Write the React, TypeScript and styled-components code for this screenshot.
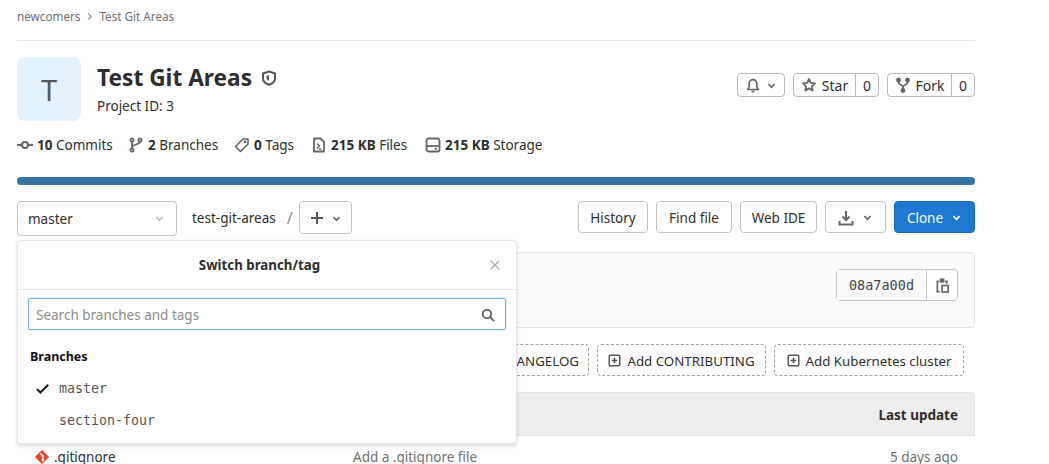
import * as React from "react"
import styled, { createGlobalStyle } from "styled-components"

const sans = `"Noto Sans", "Open Sans", Arial, sans-serif`
const mono = `"DejaVu Sans Mono", "Liberation Mono", monospace`

const GlobalStyle = createGlobalStyle`
    html, body {
        margin: 0;
        height: 464px;
        overflow: hidden;
        background: #fff;
    }
    * {
        box-sizing: border-box;
    }
    body {
        font-family: ${sans};
        font-size: 14px;
        color: #2e2e2e;
    }
`

const Page = styled.div`
    width: 958px;
    margin-left: 17px;
    height: 464px;
`

const Breadcrumbs = styled.nav`
    display: flex;
    align-items: center;
    gap: 4px;
    height: 41px;
    padding-bottom: 8px;
    border-bottom: 1px solid #e5e5e5;
    font-size: 11.7px;
    color: #707070;
`

const ProjectHeader = styled.header`
    display: flex;
    align-items: center;
    margin-top: 16px;
    height: 64px;
`

const Avatar = styled.div`
    width: 64px;
    height: 64px;
    display: flex;
    align-items: center;
    justify-content: center;
    background: #e3f2fd;
    border-radius: 8px;
    font-size: 29px;
    color: #555;
    margin-right: 16px;
`

const TitleBlock = styled.div`
    display: flex;
    flex-direction: column;
    flex: 1;
`

const TitleRow = styled.div`
    display: flex;
    align-items: center;
    gap: 9px;
    height: 32px;
`

const Title = styled.h1`
    margin: 0;
    font-size: 22.7px;
    font-weight: 700;
    line-height: 32px;
    color: #2e2e2e;
`

const ProjectId = styled.div`
    font-size: 13.5px;
    line-height: 20px;
    margin-top: 2px;
`

const Actions = styled.div`
    display: flex;
    gap: 8px;
    align-self: flex-start;
    margin-top: 16px;
`

const Group = styled.div`
    display: flex;
    height: 24px;
    border: 1px solid #bbb;
    border-radius: 4px;
    font-size: 14px;
    background: #fff;
`

const GroupPart = styled.div<{ $divided?: boolean; $w: number }>`
    display: flex;
    align-items: center;
    justify-content: center;
    gap: 5px;
    width: ${p => p.$w}px;
    border-left: ${p => (p.$divided ? "1px solid #bbb" : "none")};
`

const Stats = styled.div`
    display: flex;
    align-items: center;
    margin-top: 14px;
    height: 20px;
`

const Stat = styled.div<{ $w: number }>`
    display: flex;
    align-items: center;
    gap: 4px;
    width: ${p => p.$w}px;
    font-size: 13.5px;
    white-space: nowrap;

    b {
        font-weight: 700;
    }
`

const LanguageBar = styled.div`
    height: 8px;
    margin-top: 22px;
    background: #3572a5;
    border-radius: 4px;
`

const Toolbar = styled.div`
    display: flex;
    align-items: flex-start;
    margin-top: 16px;
    height: 51px;
`

const RefSwitcher = styled.div`
    position: relative;
    width: 160px;
    margin-right: 15px;
`

const RefButton = styled.div`
    display: flex;
    align-items: center;
    justify-content: space-between;
    height: 35px;
    padding: 0 11px 0 10px;
    border: 1px solid #c4c4c4;
    border-radius: 4px;
    font-size: 13.5px;
`

const Dropdown = styled.div`
    position: absolute;
    top: 39px;
    left: 0;
    z-index: 10;
    width: 500px;
    height: 204px;
    background: #fff;
    border: 1px solid #e5e5e5;
    border-radius: 4px;
    box-shadow: 0 2px 4px rgba(0, 0, 0, 0.15);
`

const DropdownHeader = styled.div`
    position: relative;
    height: 49px;
    display: flex;
    align-items: center;
    justify-content: center;
    padding-right: 15px;
    border-bottom: 1px solid #e5e5e5;
    font-size: 13.3px;
    font-weight: 700;
`

const CloseButton = styled.span`
    position: absolute;
    right: 14px;
    top: 17px;
    display: flex;
    color: #a7a7a7;
`

const SearchBox = styled.div`
    display: flex;
    align-items: center;
    justify-content: space-between;
    height: 32px;
    margin: 8px 10px 0;
    padding: 1px 10px 0 7px;
    border: 1px solid #73b1ee;
    border-radius: 2px;
    box-shadow: 0 0 2px rgba(31, 120, 209, 0.35);
    font-size: 13.5px;
    color: #8c8c8c;
`

const SectionLabel = styled.div`
    margin: 18px 0 6px 12px;
    font-size: 12.5px;
    line-height: 18px;
    font-weight: 700;
    color: #111;
`

const BranchRow = styled.div`
    display: flex;
    align-items: center;
    height: 32px;
    padding-left: 18px;
    font-family: ${mono};
    font-size: 13.3px;
    color: #555;
`

const CheckSlot = styled.span`
    display: flex;
    width: 23px;
    color: #222;
`

const RepoName = styled.span`
    font-size: 13.5px;
    line-height: 35px;
`

const PathSep = styled.span`
    margin: 0 6px 0 11px;
    font-size: 16px;
    line-height: 35px;
    color: #8c8c8c;
`

const Button = styled.div<{ $primary?: boolean; $w: number }>`
    display: flex;
    align-items: center;
    justify-content: center;
    gap: 8px;
    height: 32px;
    padding-top: 1px;
    width: ${p => p.$w}px;
    border: 1px solid ${p => (p.$primary ? "#1b69b6" : "#c4c4c4")};
    border-radius: 4px;
    font-size: 13.5px;
    background: ${p => (p.$primary ? "#1f78d1" : "#fff")};
    color: ${p => (p.$primary ? "#fff" : "#2e2e2e")};
`

const AddButton = styled(Button)`
    height: 33px;
    gap: 6px;
`

const ToolbarRight = styled.div`
    display: flex;
    gap: 8px;
    margin-left: auto;
`

const CommitBox = styled.div`
    display: flex;
    justify-content: flex-end;
    height: 76px;
    padding: 16px 16px 0 0;
    background: #fafafa;
    border: 1px solid #e5e5e5;
    border-radius: 4px;
`

const CommitGroup = styled.div`
    display: flex;
    height: 32px;
    border: 1px solid #c4c4c4;
    border-radius: 4px;
`

const Sha = styled.div`
    display: flex;
    align-items: center;
    justify-content: center;
    width: 89px;
    background: #fafafa;
    font-family: ${mono};
    font-size: 13.5px;
    color: #444;
`

const CopyPart = styled.div`
    display: flex;
    align-items: center;
    justify-content: center;
    width: 31px;
    background: #fff;
    border-left: 1px solid #c4c4c4;
    border-radius: 0 4px 4px 0;
`

const Suggestions = styled.div`
    display: flex;
    justify-content: flex-end;
    gap: 8px;
    height: 64px;
    padding: 16px 11px 16px 0;
`

const Suggestion = styled.div<{ $w: number }>`
    display: flex;
    align-items: center;
    justify-content: center;
    gap: 6px;
    height: 32px;
    padding-top: 1px;
    flex: 0 0 ${p => p.$w}px;
    border: 1px dashed #a0a0a0;
    border-radius: 4px;
    font-size: 13.3px;
    white-space: nowrap;
`

const TableHead = styled.div`
    display: flex;
    justify-content: flex-end;
    align-items: center;
    height: 44px;
    padding: 1px 16px 0 0;
    background: #eee;
    border: 1px solid #e5e5e5;
    border-bottom-color: #dcdcdc;
    border-radius: 4px 4px 0 0;
    font-size: 13.5px;
    font-weight: 700;
`

const TableRow = styled.div`
    display: grid;
    grid-template-columns: 318px 1fr auto;
    align-items: center;
    height: 42px;
    padding: 0 17px 0 18px;
    font-size: 13.5px;
`

const FileCell = styled.span`
    display: flex;
    align-items: center;
    gap: 5px;
`

const Muted = styled.span`
    color: #707070;
`

const Svg: React.FC<{ size?: number; children: React.ReactNode; stroke?: string; sw?: number }> = ({
    size = 16,
    children,
    stroke = "#666",
    sw = 2,
}) => (
    <svg width={size} height={size} viewBox="0 0 16 16" fill="none" stroke={stroke} strokeWidth={sw} style={{ flex: "none" }}>
        {children}
    </svg>
)

const Chevron: React.FC<{ color?: string; size?: number }> = ({ color = "#666", size = 12 }) => (
    <Svg size={size} stroke={color} sw={2.4}>
        <path d="M3.500 6l4.500 4.500L12.500 6" />
    </Svg>
)

// breadcrumb separator points right, unlike the dropdown carets
const CrumbSeparator = () => (
    <Svg size={11} stroke="#8c8c8c" sw={1.6}>
        <path d="M6 3.500l4.500 4.500L6 12.500" />
    </Svg>
)

const CommitIcon = () => (
    <Svg>
        <circle cx="8" cy="8" r="3" />
        <path d="M0 8h5M11 8h5" />
    </Svg>
)
const BranchIcon = () => (
    <Svg sw={1.8}>
        <circle cx="4" cy="3" r="1.600" />
        <circle cx="4" cy="13" r="1.600" />
        <circle cx="12" cy="3" r="1.600" />
        <path d="M4 4.500v7M12 4.500c0 3.500-8 2.500-8 6" />
    </Svg>
)
const TagIcon = () => (
    <Svg sw={1.6}>
        <path d="M9 2h4.500a.5.5 0 0 1 .5.5V7l-7.500 7.500L1.500 9.500z" strokeLinejoin="round" />
        <circle cx="11" cy="5" r=".6" />
    </Svg>
)
const FileIcon = () => (
    <Svg sw={1.8}>
        <path d="M3 1.500h6.500L13 5v9.500H3z" strokeLinejoin="round" />
        <path d="M6 6.500L8.500 9 6 11.500M8 12h2.500" strokeWidth="1.400" />
    </Svg>
)
const DiskIcon = () => (
    <Svg sw={1.8}>
        <rect x="1.500" y="1.500" width="13" height="13" rx="2" />
        <path d="M2 9h12" />
        <path d="M9.500 11.700h2.500" />
    </Svg>
)
const ShieldIcon = () => (
    <Svg stroke="#555" sw={2}>
        <path d="M8 1.500l6 2v4.500c0 3.500-3 5.800-6 6.700-3-.9-6-3.200-6-6.700V3.500z" strokeLinejoin="round" />
        <path d="M8 5L5.500 6v2c0 1 .8 2 2.500 2.800z" fill="#555" stroke="none" />
    </Svg>
)
const BellIcon = () => (
    <Svg sw={1.7}>
        <path d="M2.500 12.500h11c-1-1-1.700-2-1.700-3.500V6.500a3.800 3.800 0 0 0-7.600 0V9c0 1.500-.7 2.500-1.700 3.500z" strokeLinejoin="round" />
        <path d="M6.500 14.500h3" />
    </Svg>
)
const StarIcon = () => (
    <Svg sw={1.8}>
        <path d="M8 2l1.800 3.900 4.200.5-3.100 2.900.8 4.200L8 11.400l-3.700 2.100.8-4.200L2 6.400l4.200-.5z" strokeLinejoin="round" />
    </Svg>
)
const ForkIcon = () => (
    <Svg sw={1.8}>
        <circle cx="3.500" cy="3" r="1.500" fill="#666" />
        <circle cx="12.500" cy="3" r="1.500" fill="#666" />
        <circle cx="8" cy="13.500" r="1.500" fill="#666" />
        <path d="M3.500 4v1.500c0 2 4.500 2.500 4.500 4.500v2M12.500 4v1.500c0 2-4.500 2.500-4.500 4.500" />
    </Svg>
)
const PlusIcon = () => (
    <Svg stroke="#555" sw={2}>
        <path d="M8 2v12M2 8h12" />
    </Svg>
)
const DownloadIcon = () => (
    <Svg sw={2}>
        <path d="M8 1v9M4.500 6.500L8 10l3.500-3.500M1.500 11v3.500h13V11" />
    </Svg>
)
const ClipboardIcon = () => (
    <Svg size={15} sw={1.8}>
        <path d="M5 14.500H2.500V3.500h2M10.500 3.500h2V6" />
        <rect x="5" y="0.500" width="5" height="4.500" fill="#666" stroke="none" />
        <rect x="7.500" y="8" width="6.500" height="7" />
    </Svg>
)
const PlusSquareIcon = () => (
    <Svg size={13} sw={1.8} stroke="#555">
        <rect x="1.500" y="1.500" width="13" height="13" rx="1.500" />
        <path d="M8 4.500v7M4.500 8h7" strokeWidth="2" />
    </Svg>
)
const SearchIcon = () => (
    <Svg size={14} sw={2.2} stroke="#666">
        <circle cx="6.800" cy="6.800" r="4.800" />
        <path d="M10.500 10.500l4.500 4.500" />
    </Svg>
)
const CheckIcon = () => (
    <Svg size={13} sw={2.6} stroke="#222">
        <path d="M1 8.500l4.500 4.500L15 3.500" />
    </Svg>
)
const CloseIcon = () => (
    <Svg size={14} sw={1.6} stroke="#a7a7a7">
        <path d="M3 3l10 10M13 3L3 13" />
    </Svg>
)
const GitFileIcon = () => (
    <svg width="14" height="14" viewBox="0 0 16 16" style={{ flex: "none" }}>
        <path d="M8 .5L15.500 8 8 15.500.5 8z" fill="#e24329" stroke="#e24329" strokeLinejoin="round" />
        <path d="M6 4l3 3v5" fill="none" stroke="#fff" strokeWidth="1.400" />
        <circle cx="9" cy="7" r="1.400" fill="#fff" />
        <circle cx="9" cy="11.500" r="1.400" fill="#fff" />
    </svg>
)

export default function App() {
    return (
        <Page>
            <GlobalStyle />
            <Breadcrumbs>
                <span>newcomers</span>
                <CrumbSeparator />
                <span>Test Git Areas</span>
            </Breadcrumbs>

            <ProjectHeader>
                <Avatar>T</Avatar>
                <TitleBlock>
                    <TitleRow>
                        <Title>Test Git Areas</Title>
                        <ShieldIcon />
                    </TitleRow>
                    <ProjectId>Project ID: 3</ProjectId>
                </TitleBlock>
                <Actions>
                    <Group>
                        <GroupPart $w={46}>
                            <BellIcon />
                            <Chevron size={11} />
                        </GroupPart>
                    </Group>
                    <Group>
                        <GroupPart $w={61}>
                            <StarIcon />
                            Star
                        </GroupPart>
                        <GroupPart $divided $w={23}>
                            0
                        </GroupPart>
                    </Group>
                    <Group>
                        <GroupPart $w={63}>
                            <ForkIcon />
                            Fork
                        </GroupPart>
                        <GroupPart $divided $w={23}>
                            0
                        </GroupPart>
                    </Group>
                </Actions>
            </ProjectHeader>

            <Stats>
                <Stat $w={111}>
                    <CommitIcon />
                    <span>
                        <b>10</b> Commits
                    </span>
                </Stat>
                <Stat $w={106}>
                    <BranchIcon />
                    <span>
                        <b>2</b> Branches
                    </span>
                </Stat>
                <Stat $w={77}>
                    <TagIcon />
                    <span>
                        <b>0</b> Tags
                    </span>
                </Stat>
                <Stat $w={114}>
                    <FileIcon />
                    <span>
                        <b>215 KB</b> Files
                    </span>
                </Stat>
                <Stat $w={130}>
                    <DiskIcon />
                    <span>
                        <b>215 KB</b> Storage
                    </span>
                </Stat>
            </Stats>

            <LanguageBar />

            <Toolbar>
                <RefSwitcher>
                    <RefButton>
                        master
                        <Chevron color="#bbb" size={11} />
                    </RefButton>
                    <Dropdown>
                        <DropdownHeader>
                            Switch branch/tag
                            <CloseButton>
                                <CloseIcon />
                            </CloseButton>
                        </DropdownHeader>
                        <SearchBox>
                            Search branches and tags
                            <SearchIcon />
                        </SearchBox>
                        <SectionLabel>Branches</SectionLabel>
                        <BranchRow>
                            <CheckSlot>
                                <CheckIcon />
                            </CheckSlot>
                            master
                        </BranchRow>
                        <BranchRow>
                            <CheckSlot />
                            section-four
                        </BranchRow>
                    </Dropdown>
                </RefSwitcher>
                <RepoName>test-git-areas</RepoName>
                <PathSep>/</PathSep>
                <AddButton $w={53}>
                    <PlusIcon />
                    <Chevron size={11} />
                </AddButton>
                <ToolbarRight>
                    <Button $w={70}>History</Button>
                    <Button $w={76}>Find file</Button>
                    <Button $w={77}>Web IDE</Button>
                    <Button $w={61}>
                        <DownloadIcon />
                        <Chevron size={11} />
                    </Button>
                    <Button $primary $w={81}>
                        Clone
                        <Chevron color="#fff" size={11} />
                    </Button>
                </ToolbarRight>
            </Toolbar>

            <CommitBox>
                <CommitGroup>
                    <Sha>08a7a00d</Sha>
                    <CopyPart>
                        <ClipboardIcon />
                    </CopyPart>
                </CommitGroup>
            </CommitBox>

            <Suggestions>
                <Suggestion $w={148}>
                    <PlusSquareIcon />
                    Add CHANGELOG
                </Suggestion>
                <Suggestion $w={169}>
                    <PlusSquareIcon />
                    Add CONTRIBUTING
                </Suggestion>
                <Suggestion $w={190}>
                    <PlusSquareIcon />
                    Add Kubernetes cluster
                </Suggestion>
            </Suggestions>

            <TableHead>Last update</TableHead>
            <TableRow>
                <FileCell>
                    <GitFileIcon />
                    .gitignore
                </FileCell>
                <Muted>Add a .gitignore file</Muted>
                <Muted>5 days ago</Muted>
            </TableRow>
        </Page>
    )
}
